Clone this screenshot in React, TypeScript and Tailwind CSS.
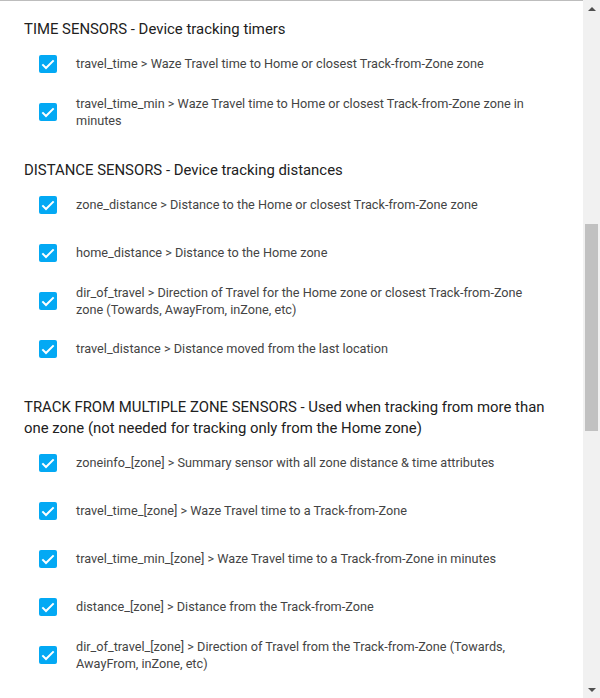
const sections = [
  {
    title: "TIME SENSORS - Device tracking timers",
    items: [
      "travel_time > Waze Travel time to Home or closest Track-from-Zone zone",
      "travel_time_min > Waze Travel time to Home or closest Track-from-Zone zone in minutes",
    ],
  },
  {
    title: "DISTANCE SENSORS - Device tracking distances",
    items: [
      "zone_distance > Distance to the Home or closest Track-from-Zone zone",
      "home_distance > Distance to the Home zone",
      "dir_of_travel > Direction of Travel for the Home zone or closest Track-from-Zone zone (Towards, AwayFrom, inZone, etc)",
      "travel_distance > Distance moved from the last location",
    ],
  },
  {
    title:
      "TRACK FROM MULTIPLE ZONE SENSORS - Used when tracking from more than one zone (not needed for tracking only from the Home zone)",
    items: [
      "zoneinfo_[zone] > Summary sensor with all zone distance & time attributes",
      "travel_time_[zone] > Waze Travel time to a Track-from-Zone",
      "travel_time_min_[zone] > Waze Travel time to a Track-from-Zone in minutes",
      "distance_[zone] > Distance from the Track-from-Zone",
      "dir_of_travel_[zone] > Direction of Travel from the Track-from-Zone (Towards, AwayFrom, inZone, etc)",
    ],
  },
];

function Checkbox() {
  return (
    <div className="flex h-[18px] w-[18px] shrink-0 items-center justify-center rounded-[2px] bg-[#03a9f4]">
      <svg viewBox="0 0 24 24" className="h-[16px] w-[16px]">
        <path
          d="M3.5 12.5 L9 18 L20.5 6.5"
          fill="none"
          stroke="white"
          strokeWidth="3"
        />
      </svg>
    </div>
  );
}

export default function App() {
  return (
    <div className="flex h-[698px] w-[600px] overflow-hidden bg-white font-['Roboto',sans-serif]">
      <div className="flex-1 border-t border-[#bdbdbd] px-6 pt-[18px]">
        {sections.map((section, i) => (
          <div key={i} className={i > 0 ? "mt-6" : ""}>
            <h2 className="text-[14.9px] leading-[21px] text-[#212121]">
              {section.title}
            </h2>
            {section.items.map((item, j) => (
              <div key={j} className="flex h-12 items-center pr-5">
                <div className="ml-[15px]">
                  <Checkbox />
                </div>
                <p className="mb-[1px] ml-[19px] text-[12.7px] leading-[17px] text-[#444444]">
                  {item}
                </p>
              </div>
            ))}
          </div>
        ))}
      </div>

      {/* scrollbar */}
      <div className="flex w-[17px] flex-col bg-[#f1f1f1]">
        <div className="flex h-[17px] items-center justify-center">
          <div className="h-0 w-0 border-x-[4px] border-b-[4px] border-x-transparent border-b-[#505050]" />
        </div>
        <div className="flex-1">
          <div className="mx-[2px] mt-[207px] h-[207px] bg-[#c1c1c1]" />
        </div>
        <div className="flex h-[17px] items-center justify-center">
          <div className="h-0 w-0 border-x-[4px] border-t-[4px] border-x-transparent border-t-[#505050]" />
        </div>
      </div>
    </div>
  );
}
